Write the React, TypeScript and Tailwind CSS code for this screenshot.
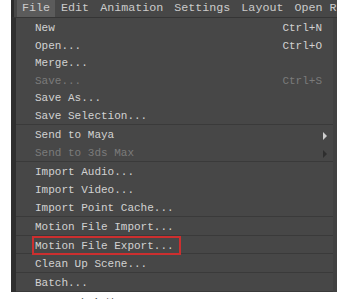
import React from "react";

type Item = {
  label: string;
  h: string;
  shortcut?: string;
  disabled?: boolean;
  submenu?: boolean;
  marked?: boolean;
};

const groups: { items: Item[] }[] = [
  {
    items: [
      { label: "New", shortcut: "Ctrl+N", h: "h-[18px]" },
      { label: "Open...", shortcut: "Ctrl+O", h: "h-[17px]" },
      { label: "Merge...", h: "h-[18px]" },
      { label: "Save...", shortcut: "Ctrl+S", disabled: true, h: "h-[17px]" },
      { label: "Save As...", h: "h-[18px]" },
      { label: "Save Selection...", h: "h-[18px]" },
    ],
  },
  {
    items: [
      { label: "Send to Maya", submenu: true, h: "h-[18px]" },
      { label: "Send to 3ds Max", submenu: true, disabled: true, h: "h-[18px]" },
    ],
  },
  {
    items: [
      { label: "Import Audio...", h: "h-[18px]" },
      { label: "Import Video...", h: "h-[18px]" },
      { label: "Import Point Cache...", h: "h-[18px]" },
    ],
  },
  { items: [{ label: "Motion File Import...", h: "h-[18px]" }] },
  { items: [{ label: "Motion File Export...", h: "h-[17px]", marked: true }] },
  { items: [{ label: "Clean Up Scene...", h: "h-[18px]" }] },
  { items: [{ label: "Batch...", h: "h-[18px]" }] },
];

const menus = ["File", "Edit", "Animation", "Settings", "Layout", "Open Reality"];

const App: React.FC = () => {
  return (
    <div className="w-[337px] h-[299px] overflow-hidden bg-white font-['Liberation_Mono',monospace]">
      <div className="ml-[11px] w-[326px] bg-[#414141]">
        {/* menu bar */}
        <div className="h-[18px] flex gap-[1px] pl-[3px] border-l-[3px] border-[#2c2c2c] border-b border-b-[#353535] bg-[#474747] overflow-hidden whitespace-nowrap text-[11.7px] text-[#cbcbcb]">
          {menus.map((m, i) => (
            <div
              key={m}
              className={`px-[5px] h-[17px] flex items-center pt-[1px] ${i === 0 ? "bg-[#5b5b5b]" : ""}`}
            >
              {m}
            </div>
          ))}
        </div>

        {/* dropdown */}
        <div className="w-[322px] border-l-[5px] border-[#2f2f2f] bg-[#474747] text-[11px]">
          {groups.map((g, gi) => (
            <div key={gi} className="border-b border-[#3a3a3a]">
              {g.items.map((it) => (
                <div
                  key={it.label}
                  className={`${it.h} relative flex items-center justify-between pt-[3px] pl-[19px] ${
                    it.submenu ? "pr-[6px]" : "pr-[11px]"
                  } ${it.disabled ? "text-[#7b7b7b]" : "text-[#d2d2d2]"}`}
                >
                  <span className="whitespace-pre">{it.label}</span>
                  {it.shortcut && <span>{it.shortcut}</span>}
                  {it.submenu && (
                    <span
                      className={`w-0 h-0 border-y-[4px] border-y-transparent border-l-[4px] ${
                        it.disabled ? "border-l-[#2e2e2e]" : "border-l-[#cfcfcf]"
                      }`}
                    />
                  )}
                  {it.marked && (
                    <span className="absolute left-[16px] top-0 w-[149px] h-[19px] border-2 border-[#cc2f2f]" />
                  )}
                </div>
              ))}
            </div>
          ))}
        </div>
      </div>

      <div className="mt-[3px] ml-[13px] text-[14px] leading-[18px] text-[#333] font-['Noto_Sans_CJK_SC',sans-serif]">
        图 2-12 导出文件
      </div>
    </div>
  );
};

export default App;
